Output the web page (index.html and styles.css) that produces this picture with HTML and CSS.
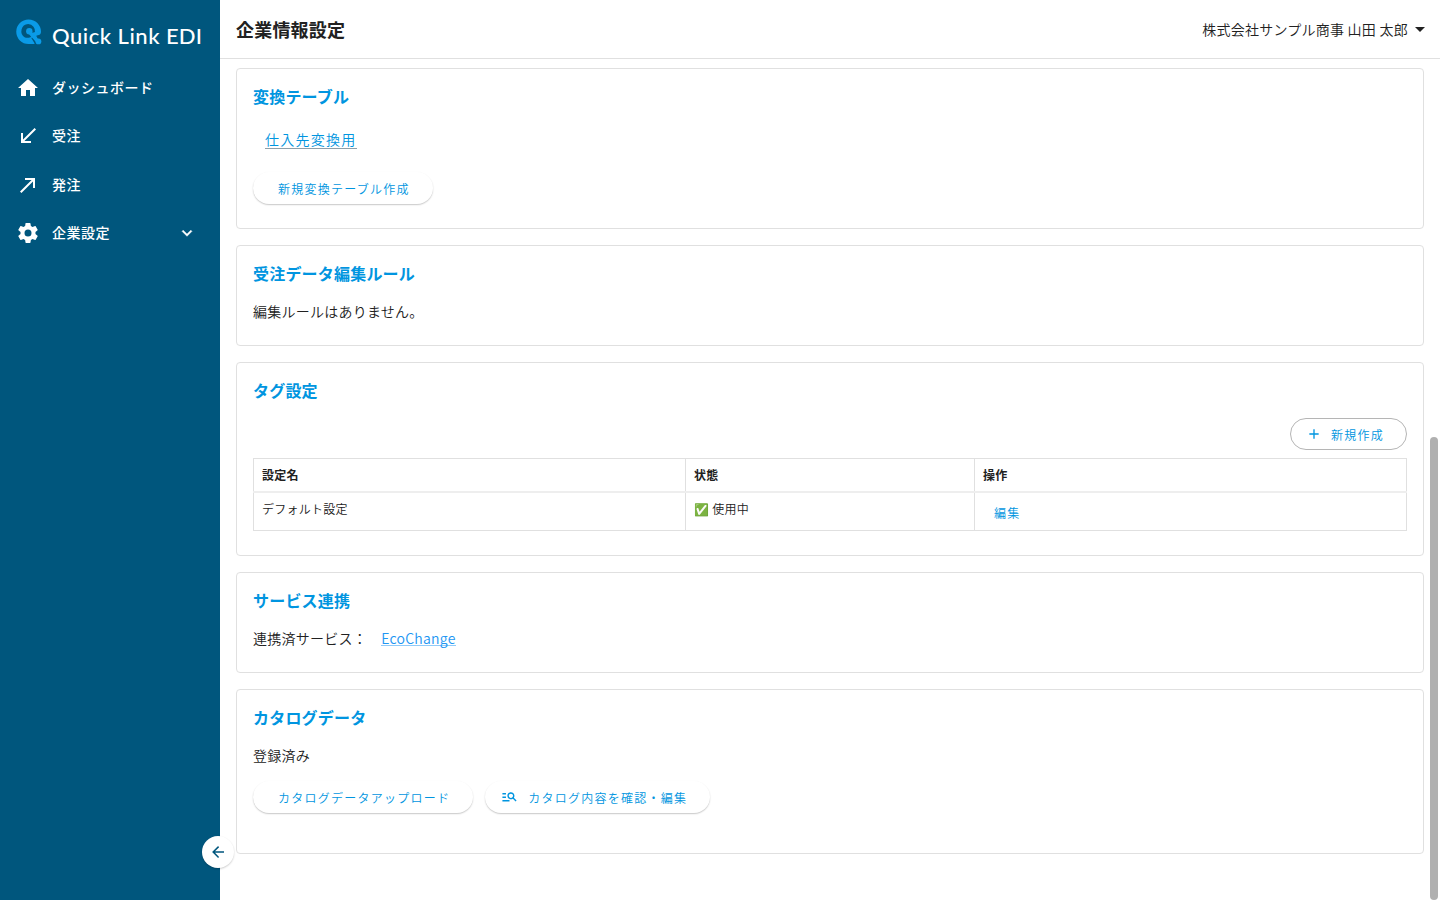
FILE: index.html
```html
<!DOCTYPE html>
<html lang="ja">
<head>
    <meta charset="UTF-8">
    <title>企業情報設定</title>
    <link rel="stylesheet" href="styles.css">
</head>
<body>
<div class="app">
    <nav class="sidebar">
        <div class="logo">
            <svg class="logo-mark" viewBox="0 0 26 26" width="26" height="26">
                <path fill="#0a9be8" fill-rule="evenodd" d="M12.500 .5C19.500 .5 25 6 25 12.700C25 15 23.700 16.200 22 16.200L18.500 25H12.500A12.250 12.250 0 0 1 12.500 .5zM12.200 5A7.300 7.300 0 0 0 9 18.600Q12 19.300 14.500 18.200L19 13.500A7.300 7.300 0 0 0 12.200 5z"/>
                <path class="logo-gap" d="M16 18.500L20.500 26M20.500 16.800L26 18.500"/>
                <path fill="none" stroke="#0a9be8" stroke-width="3.6" d="M13.500 12.500Q16 17 22.300 22.300M17 15.500L22.500 14"/>
                <circle cx="13.300" cy="12.300" r="3.200" fill="#0a9be8"/>
                <circle cx="22.400" cy="22.400" r="2.900" fill="#0a9be8"/>
            </svg>
            <svg class="logo-text" viewBox="0 0 154 28" width="154" height="28">
                <text y="20"><tspan x="0" textLength="59">Quick</tspan> <tspan x="65.500" textLength="42">Link</tspan> <tspan x="114" textLength="36">EDI</tspan></text>
            </svg>
        </div>
        <ul class="menu">
            <li>
                <svg viewBox="0 0 24 24"><path d="M10 20v-6h4v6h5v-8h3L12 3 2 12h3v8z"/></svg>
                <span>ダッシュボード</span>
            </li>
            <li>
                <svg viewBox="0 0 24 24"><path d="M20 5.410L18.590 4 7 15.590V9H5v10h10v-2H8.410z"/></svg>
                <span>受注</span>
            </li>
            <li>
                <svg viewBox="0 0 24 24"><path d="M9 5v2h6.590L4 18.590 5.410 20 17 8.410V15h2V5z"/></svg>
                <span>発注</span>
            </li>
            <li>
                <svg viewBox="0 0 24 24"><path d="M12 15.500A3.500 3.500 0 0 1 8.500 12 3.500 3.500 0 0 1 12 8.500a3.500 3.500 0 0 1 3.500 3.500 3.500 3.500 0 0 1-3.500 3.500m7.430-2.530c.04-.32.07-.64.07-.97s-.03-.66-.07-1l2.110-1.630c.19-.15.24-.42.12-.64l-2-3.460c-.12-.22-.39-.31-.61-.22l-2.490 1c-.52-.39-1.060-.73-1.690-.98l-.37-2.650A.506.506 0 0 0 14 2h-4c-.25 0-.46.18-.5.42l-.37 2.650c-.63.25-1.170.59-1.690.98l-2.490-1c-.22-.09-.49 0-.61.22l-2 3.460c-.13.22-.07.49.12.64L4.570 11c-.04.34-.07.67-.07 1s.03.65.07.97l-2.110 1.660c-.19.15-.25.42-.12.64l2 3.460c.12.22.39.3.61.22l2.490-1.010c.52.4 1.060.74 1.690.99l.37 2.650c.04.24.25.42.5.42h4c.25 0 .46-.18.5-.42l.37-2.650c.63-.26 1.170-.59 1.690-.99l2.490 1.010c.22.08.49 0 .61-.22l2-3.460c.12-.22.07-.49-.12-.64z"/></svg>
                <span>企業設定</span>
                <svg class="chevron" viewBox="0 0 24 24"><path d="M7.410 8.580L12 13.170l4.590-4.590L18 10l-6 6-6-6z"/></svg>
            </li>
        </ul>
        <button class="collapse">
            <svg viewBox="0 0 24 24"><path d="M20 11v2H8l5.500 5.500-1.420 1.420L4.160 12l7.920-7.920L13.500 5.500 8 11z"/></svg>
        </button>
    </nav>
    <div class="main">
        <header class="header">
            <h1>企業情報設定</h1>
            <div class="user">
                <span>株式会社サンプル商事 山田 太郎</span>
                <svg viewBox="0 0 24 24"><path d="M7 10l5 5 5-5z"/></svg>
            </div>
        </header>
        <div class="content">
            <section class="card card-convert">
                <h2>変換テーブル</h2>
                <a class="table-link">仕入先変換用</a>
                <button class="btn">新規変換テーブル作成</button>
            </section>
            <section class="card card-rule">
                <h2>受注データ編集ルール</h2>
                <p>編集ルールはありません。</p>
            </section>
            <section class="card card-tag">
                <h2>タグ設定</h2>
                <div class="actions">
                    <button class="btn btn-outlined">
                        <svg viewBox="0 0 24 24"><path d="M19 13h-6v6h-2v-6H5v-2h6V5h2v6h6z"/></svg>
                        <span>新規作成</span>
                    </button>
                </div>
                <table>
                    <thead>
                        <tr><th class="col-name">設定名</th><th class="col-state">状態</th><th>操作</th></tr>
                    </thead>
                    <tbody>
                        <tr>
                            <td>デフォルト設定</td>
                            <td>✅ 使用中</td>
                            <td class="cell-edit"><a class="edit">編集</a></td>
                        </tr>
                    </tbody>
                </table>
            </section>
            <section class="card card-service">
                <h2>サービス連携</h2>
                <p>連携済サービス：　<a class="service-link">EcoChange</a></p>
            </section>
            <section class="card card-catalog">
                <h2>カタログデータ</h2>
                <p>登録済み</p>
                <div class="buttons">
                    <button class="btn">カタログデータアップロード</button>
                    <button class="btn btn-icon">
                        <svg viewBox="0 0 24 24"><path d="M7 9H2V7h5v2zm0 3H2v2h5v-2zm13.590 7l-3.830-3.830c-.8.52-1.740.83-2.760.83-2.760 0-5-2.240-5-5s2.240-5 5-5 5 2.240 5 5c0 1.020-.31 1.960-.83 2.750L22 17.590 20.590 19zM17 11c0-1.650-1.350-3-3-3s-3 1.350-3 3 1.350 3 3 3 3-1.350 3-3zM2 19h10v-2H2v2z"/></svg>
                        <span>カタログ内容を確認・編集</span>
                    </button>
                </div>
            </section>
        </div>
    </div>
    <div class="scrollbar"></div>
</div>
</body>
</html>
```
FILE: styles.css
```css
*{
    margin: 0;
    padding: 0;
    box-sizing: border-box;
}
body{
    font-family: "Noto Sans CJK JP", sans-serif;
    font-size: 14px;
    font-weight: 350;
    line-height: 20px;
    letter-spacing: 0.25px;
    color: #212121;
    background-color: #fff;
}
svg{
    fill: currentColor;
    flex-shrink: 0;
}
.app{
    display: flex;
    position: relative;
    width: 1440px;
    height: 900px;
    overflow: hidden;
}
.sidebar{
    position: relative;
    width: 220px;
    background-color: #00567d;
    color: #fff;
}
.logo{
    display: flex;
    height: 64px;
    padding: 19px 0 0 16px;
}
.logo-gap{
    fill: none;
    stroke: #00567d;
    stroke-width: 1.6;
}
.logo-text{
    margin: 5px 0 0 10px;
    font-family: Lato, sans-serif;
    font-size: 22px;
    font-weight: 500;
    letter-spacing: 0;
}
.menu{
    list-style: none;
}
.menu li{
    display: flex;
    align-items: center;
    height: 48px;
    margin-bottom: 0.4px;
    padding: 0 22px 0 16px;
    font-weight: 500;
    letter-spacing: 0.5px;
}
.menu span{
    padding-bottom: 2px;
}
.menu svg{
    width: 24px;
    height: 24px;
    margin-right: 12px;
}
.menu .chevron{
    width: 20px;
    height: 20px;
    margin: 0 1px 0 auto;
    stroke: #fff;
    stroke-width: 0.5;
}
.collapse{
    position: absolute;
    right: -14px;
    top: 836px;
    width: 32px;
    height: 32px;
    border: none;
    border-radius: 50%;
    background-color: #fff;
    color: #00567d;
    box-shadow: 0 1px 2px rgba(0,0,0,.2);
}
.collapse svg{
    display: block;
    width: 18px;
    height: 18px;
    margin: 0 auto;
}
.main{
    flex: 1;
}
.header{
    display: flex;
    justify-content: space-between;
    align-items: center;
    height: 59px;
    padding: 0 8px 0 16px;
    border-bottom: 1px solid #e0e0e0;
}
.header h1{
    font-size: 18px;
    font-weight: 700;
    letter-spacing: 0.2px;
}
.user{
    display: flex;
    align-items: center;
}
.user span{
    padding-bottom: 1px;
}
.user svg{
    width: 24px;
    height: 24px;
}
.content{
    padding: 9px 16px 0;
}
.card{
    margin-bottom: 16px;
    padding: 15px 16px;
    border: 1px solid #e0e0e0;
    border-radius: 4px;
}
.card h2{
    margin-bottom: 16px;
    font-size: 16px;
    line-height: 24px;
    font-weight: 700;
    letter-spacing: 0.2px;
    color: #0095e0;
}
.card-convert{
    height: 161px;
}
.card-rule,
.card-service{
    height: 101px;
}
.card-tag{
    height: 194px;
}
.card-catalog{
    height: 165px;
}
.table-link{
    display: table;
    margin: 22px 0 23px 12px;
    line-height: 18px;
    letter-spacing: 1.25px;
    color: #0095e0;
    border-bottom: 1px solid #8d9fa9;
}
.btn{
    display: flex;
    align-items: center;
    height: 32px;
    padding: 1px 23px 0 25px;
    border: none;
    border-radius: 16px;
    background-color: #fff;
    box-shadow: 0 1px 1.5px rgba(0,0,0,.22);
    font-family: inherit;
    font-size: 12px;
    font-weight: inherit;
    letter-spacing: 1.25px;
    color: #0095e0;
}
.btn svg{
    width: 16px;
    height: 16px;
    margin: -2px 8px 0 0;
}
.btn-outlined{
    padding: 1px 22px 0 15px;
    border: 1px solid #b5b5b5;
    box-shadow: none;
}
.btn-outlined svg{
    margin-right: 9px;
}
.btn-icon{
    padding: 1px 23px 0 16px;
}
.btn-icon svg{
    width: 17px;
    height: 17px;
    margin-right: 10px;
}
.actions{
    display: flex;
    justify-content: flex-end;
    margin-bottom: 8px;
}
table{
    width: 100%;
    table-layout: fixed;
    border-collapse: collapse;
    border: 1px solid #e0e0e0;
    font-size: 12px;
}
th,
td{
    padding: 0 8px;
    border: 1px solid #e0e0e0;
    text-align: left;
    vertical-align: middle;
}
th{
    height: 33px;
    font-weight: 700;
    border-bottom: 2px solid #eeeeee;
}
td{
    height: 39px;
    padding-bottom: 4px;
}
.col-name{
    width: 432px;
}
.col-state{
    width: 289px;
}
.cell-edit{
    padding: 4px 0 0 19px;
}
.edit{
    letter-spacing: 1.25px;
    color: #0095e0;
}
.service-link{
    display: inline-block;
    height: 18px;
    color: #2196f3;
    border-bottom: 1px solid #90caf9;
}
.buttons{
    display: flex;
    gap: 12px;
    margin-top: 16px;
}
.scrollbar{
    position: absolute;
    right: 2px;
    top: 437px;
    width: 8px;
    height: 463px;
    border-radius: 4px;
    background-color: #b0b0b0;
}
```
